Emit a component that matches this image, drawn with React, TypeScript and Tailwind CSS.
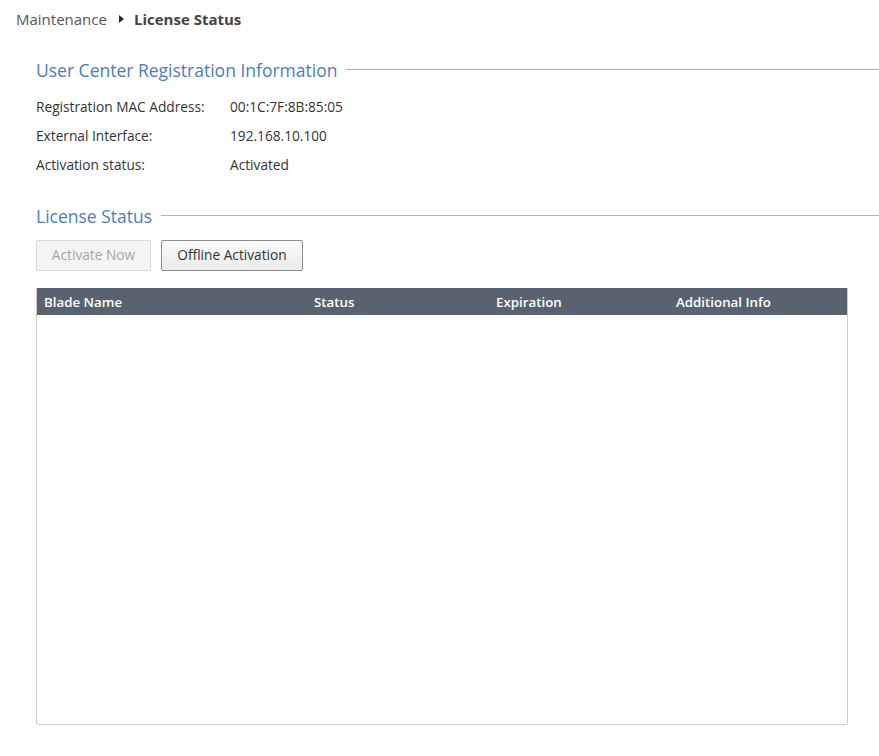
import React from 'react';

const font = { fontFamily: '"Open Sans", "Noto Sans", sans-serif' };

const regInfo = [
  { label: 'Registration MAC Address:', value: '00:1C:7F:8B:85:05' },
  { label: 'External Interface:', value: '192.168.10.100' },
  { label: 'Activation status:', value: 'Activated' },
];

const SectionTitle = ({ title }: { title: string }) => (
  <div className="flex items-center gap-[9px]">
    <span className="text-[17.5px] leading-[24px] text-[#4b7bc6] whitespace-nowrap">{title}</span>
    <div className="flex-1 h-px bg-[#b3b3b3] mt-[-2px]" />
  </div>
);

export default function App() {
  return (
    <div className="w-[879px] h-[756px] bg-white text-[#333] overflow-hidden" style={font}>
      {/* Breadcrumb */}
      <div className="flex items-center pl-[16px] pt-[9px] h-[20px] box-content text-[15px]">
        <span className="text-[#555]">Maintenance</span>
        <svg width="5" height="8" viewBox="0 0 5 8" className="ml-[12px] mr-[10px]">
          <polygon points="0,0 5,4 0,8" fill="#1f2a48" />
        </svg>
        <span className="font-bold text-[#444]">License Status</span>
      </div>

      <div className="pl-[36px] pt-[29px]">
        <SectionTitle title="User Center Registration Information" />

        <div className="mt-[11px] flex flex-col text-[13.7px] text-[#333]">
          {regInfo.map((row) => (
            <div key={row.label} className="flex h-[29px] items-center">
              <span className="w-[194px]">{row.label}</span>
              <span>{row.value}</span>
            </div>
          ))}
        </div>

        <div className="mt-[24px]">
          <SectionTitle title="License Status" />
        </div>

        <div className="mt-[12px] flex gap-[10px] text-[13.7px]">
          <button
            disabled
            className="h-[31px] w-[115px] rounded-[2px] border border-[#d9d9d9] bg-[#f4f4f4] text-[#a6a6a6]"
          >
            Activate Now
          </button>
          <button className="h-[31px] w-[142px] rounded-[2px] border border-[#8c8c8c] bg-gradient-to-b from-[#fafafa] to-[#ececec] text-[#333]">
            Offline Activation
          </button>
        </div>

        <div className="mt-[17px] w-[812px] h-[437px] flex flex-col border border-[#cccccc] border-t-0 rounded-b-[3px] overflow-hidden">
          <div className="grid grid-cols-[270px_182px_180px_1fr] h-[27px] pt-[2px] items-center bg-[#59636f] text-white text-[13.3px] font-semibold">
            <span className="pl-[7px]">Blade Name</span>
            <span className="pl-[7px]">Status</span>
            <span className="pl-[7px]">Expiration</span>
            <span className="pl-[7px]">Additional Info</span>
          </div>
          <div className="flex-1 bg-white" />
        </div>
      </div>
    </div>
  );
}
